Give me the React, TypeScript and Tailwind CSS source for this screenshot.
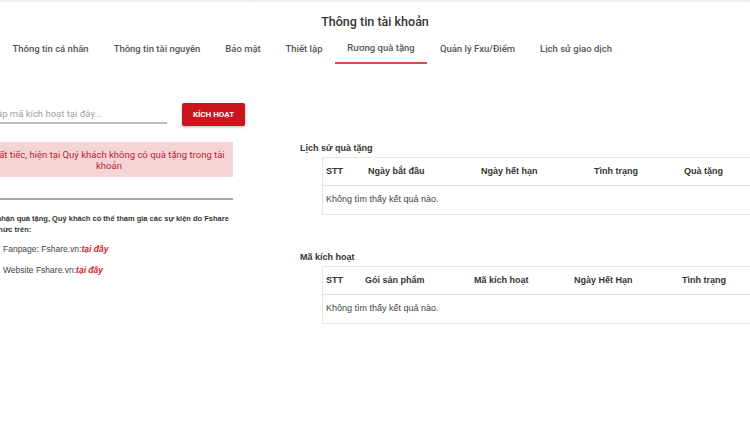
import React from 'react';

const tabs = [
  { label: 'Thông tin cá nhân', w: 'w-[101px]' },
  { label: 'Thông tin tài nguyên', w: 'w-[112px]' },
  { label: 'Bảo mật', w: 'w-[60px]' },
  { label: 'Thiết lập', w: 'w-[62px]' },
  { label: 'Rương quà tặng', w: 'w-[92px]', active: true },
  { label: 'Quản lý Fxu/Điểm', w: 'w-[101px]' },
  { label: 'Lịch sử giao dịch', w: 'w-[96px]' },
];

interface Column {
  label: string;
  w: string;
}

const giftColumns: Column[] = [
  { label: 'STT', w: 'w-[42px]' },
  { label: 'Ngày bắt đầu', w: 'w-[113px]' },
  { label: 'Ngày hết hạn', w: 'w-[113px]' },
  { label: 'Tình trạng', w: 'w-[90px]' },
  { label: 'Quà tặng', w: 'w-[100px]' },
];

const codeColumns: Column[] = [
  { label: 'STT', w: 'w-[39px]' },
  { label: 'Gói sản phẩm', w: 'w-[109px]' },
  { label: 'Mã kích hoạt', w: 'w-[100px]' },
  { label: 'Ngày Hết Hạn', w: 'w-[108px]' },
  { label: 'Tình trạng', w: 'w-[100px]' },
];

function EmptyTable({ title, columns }: { title: string; columns: Column[] }) {
  return (
    <div>
      <div className="h-[14px] leading-[14px] text-[9px] font-bold text-[#333]">{title}</div>
      <div className="ml-[22px] mt-[2px] w-[480px] border border-[#e6e6e6] bg-white">
        <div className="flex h-[28px] items-center border-b border-[#e0e0e0]">
          {columns.map((c) => (
            <div key={c.label} className={`${c.w} shrink-0 pl-[3px] text-[9px] font-bold text-[#333]`}>
              {c.label}
            </div>
          ))}
        </div>
        <div className="flex h-[28px] items-center pl-[3px] text-[9px] text-[#444]">
          Không tìm thấy kết quả nào.
        </div>
      </div>
    </div>
  );
}

export default function App() {
  return (
    <div className="relative h-[430px] w-[750px] overflow-hidden bg-white font-['Liberation_Sans',Arial,sans-serif]">
      {/* Header */}
      <div className="h-[3px] bg-gradient-to-b from-[#ececec] to-white"></div>
      <div className="pt-[11px] text-center font-['Roboto',sans-serif] text-[12.5px] font-medium leading-[16px] text-[#333]">
        Thông tin tài khoản
      </div>

      {/* Tabs */}
      <div className="mt-[4px] flex font-['Roboto',sans-serif]">
        {tabs.map((t) => (
          <div
            key={t.label}
            className={`${t.w} flex h-[30px] shrink-0 items-center justify-center whitespace-nowrap text-[9.5px] font-medium text-[#555] ${
              t.active ? 'border-b-2 border-[#e0474c]' : ''
            }`}
          >
            {t.label}
          </div>
        ))}
      </div>

      {/* Content */}
      <div className="flex">
        <div className="ml-[-15px] mt-[39px] w-[248px] shrink-0">
          <div className="flex items-end">
            <div className="w-[182px] shrink-0 border-b-2 border-[#bdbdbd] pb-[1px] font-['Roboto',sans-serif] text-[9.5px] leading-[14px] text-[#9e9e9e]">
              Nhập mã kích hoạt tại đây...
            </div>
            <button className="ml-[15px] mb-[-2px] h-[23px] w-[63px] shrink-0 rounded-[2px] bg-[#cc141c] font-['Roboto',sans-serif] text-[8px] font-bold text-white shadow-[0_1px_3px_rgba(0,0,0,0.3)]">
              KÍCH HOẠT
            </button>
          </div>

          <div className="mt-[18px] flex h-[35px] flex-col items-center justify-center bg-[#f5d4d7] text-center font-['Roboto',sans-serif] text-[9.5px] leading-[11px] text-[#b5262c]">
            <span>Rất tiếc, hiện tại Quý khách không có quà tặng trong tài</span>
            <span>khoản</span>
          </div>

          <div className="mt-[21px] border-b-2 border-[#a8a8a8]"></div>

          <div className="mt-[13px] whitespace-nowrap text-[7.5px] font-bold leading-[11px] text-[#333]">
            Để nhận quà tặng, Quý khách có thể tham gia các sự kiện do Fshare
            <br />
            tổ chức trên:
          </div>

          <ul className="mt-[4px] pl-[18px] text-[8.5px] leading-[21px] text-[#444]">
            <li>
              Fanpage: Fshare.vn:<span className="font-bold italic text-[#d9232b]">tại đây</span>
            </li>
            <li>
              Website Fshare.vn:<span className="font-bold italic text-[#d9232b]">tại đây</span>
            </li>
          </ul>
        </div>

        <div className="ml-[67px] mt-[77px] flex flex-col gap-[35px]">
          <EmptyTable title="Lịch sử quà tặng" columns={giftColumns} />
          <EmptyTable title="Mã kích hoạt" columns={codeColumns} />
        </div>
      </div>
    </div>
  );
}
